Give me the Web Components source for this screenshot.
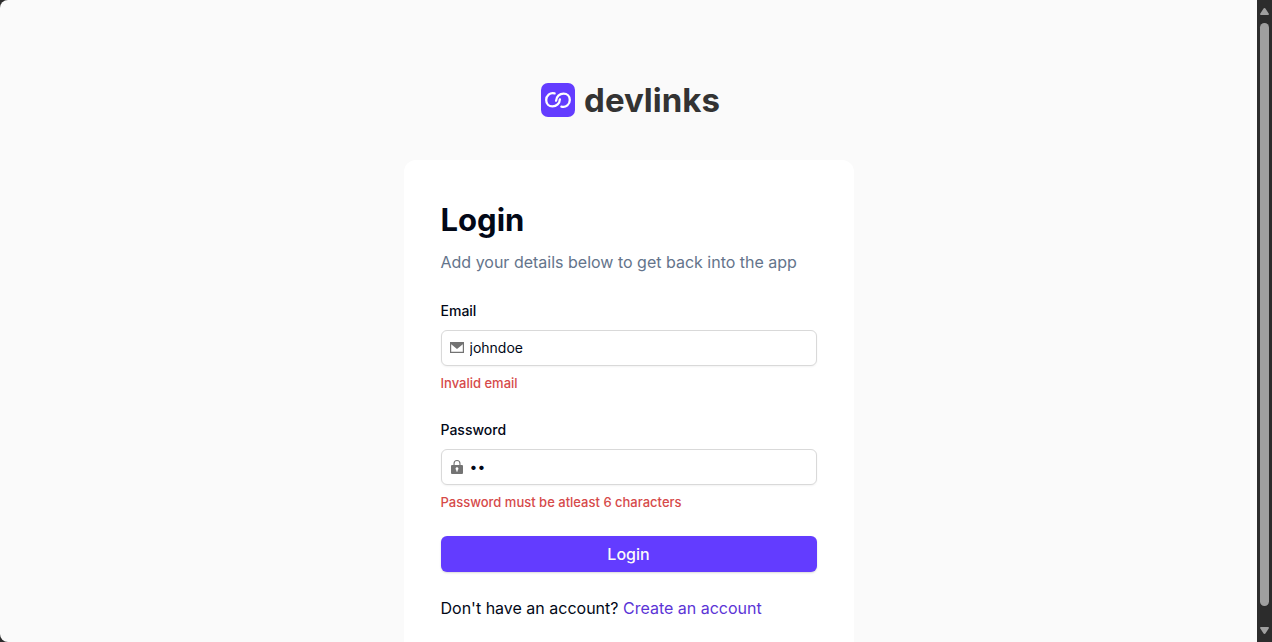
<!DOCTYPE html>
<html lang="en">
<head>
<meta charset="utf-8">
<meta name="viewport" content="width=device-width, initial-scale=1">
<title>devlinks | Login</title>
<style>
  html, body { margin: 0; height: 100%; }
  body {
    background: #2c2c2c;
    color: #020817;
    font: 16px/24px Inter, "Liberation Sans", sans-serif;
    overflow: hidden;
    --brand: #633cff;
    --muted: #64748b;
    --danger: #d64a4a;
    --line: #d9d9d9;
  }
</style>
</head>
<body>
<app-shell>
  <brand-logo></brand-logo>
  <login-card heading="Login" intro="Add your details below to get back into the app"></login-card>
</app-shell>

<script>
class BaseElement extends HTMLElement {
  render(html) {
    const template = document.createElement('template');
    template.innerHTML = html;
    this.attachShadow({ mode: 'open' }).append(template.content.cloneNode(true));
  }
}

customElements.define('scroll-rail', class extends BaseElement {
  connectedCallback() {
    this.render(`
      <style>
        :host { display: flex; flex-direction: column; align-items: center; width: 15px; background: #2c2c2c; }
        svg { display: block; flex: none; fill: #9f9f9f; }
        .thumb { flex: 583; width: 9px; border-radius: 5px; background: #9f9f9f; }
        .rest { flex: 13; }
      </style>
      <svg width="9" height="23"><path d="M4.5 8 Q5.2 8 5.6 8.7 L9 14 Q9 15 8 15 H1 Q0 15 0 14 L3.4 8.7 Q3.8 8 4.5 8Z"/></svg>
      <div class="thumb"></div>
      <div class="rest"></div>
      <svg width="9" height="23"><path d="M4.5 15 Q5.2 15 5.6 14.3 L9 9 Q9 8 8 8 H1 Q0 8 0 9 L3.4 14.3 Q3.8 15 4.5 15Z"/></svg>`);
  }
});

customElements.define('app-shell', class extends BaseElement {
  connectedCallback() {
    this.render(`
      <style>
        :host { display: flex; height: 100vh; }
        main {
          flex: 1; box-sizing: border-box; min-width: 0; overflow: hidden;
          display: flex; flex-direction: column; align-items: center; gap: 40px;
          padding: 80px 16px; background: #fafafa; border-radius: 8px 0 0 8px;
        }
        ::slotted(*) { flex: none; }
      </style>
      <main><slot></slot></main>
      <scroll-rail aria-hidden="true"></scroll-rail>`);
  }
});

customElements.define('brand-logo', class extends BaseElement {
  connectedCallback() {
    this.render(`
      <style>
        :host { display: flex; align-items: center; gap: 9px; height: 40px; padding-left: 4px; color: #333; font-size: 33px; line-height: 40px; font-weight: 700; }
        svg { display: block; }
      </style>
      <svg width="34" height="34" viewBox="0 0 34 34" aria-hidden="true">
        <rect width="34" height="34" rx="7" fill="#633cff"/>
        <g fill="none" stroke="#fff" stroke-width="2.3" stroke-linecap="round">
          <path d="M13.6 10.4C8.9 9.2 5.2 12.7 5.2 17C5.2 21 8 23.4 11.4 23.4C15.5 23.4 18.7 20.5 18.9 16.3"/>
          <path transform="rotate(180 17 17)" d="M13.6 10.4C8.9 9.2 5.2 12.7 5.2 17C5.2 21 8 23.4 11.4 23.4C15.5 23.4 18.7 20.5 18.9 16.3"/>
        </g>
      </svg>
      <span>devlinks</span>`);
  }
});

const ICONS = {
  email: '<path fill-rule="evenodd" d="M1 2H15V13H1Z M2.2 4.2V11.8H13.8V4.2L8 9Z"/>',
  password: '<path fill-rule="evenodd" d="M4.5 6V4.5a3.5 3.5 0 0 1 7 0V6H13q1 0 1 1v7q0 1-1 1H3q-1 0-1-1V7q0-1 1-1Z M5.6 6H10.4V4.5a2.4 2.4 0 0 0-4.8 0Z M8 8.2a1.5 1.5 0 0 0-.7 2.8V12.5h1.4V11A1.5 1.5 0 0 0 8 8.2Z"/>'
};

customElements.define('form-field', class extends BaseElement {
  connectedCallback() {
    const type = this.getAttribute('type');
    this.render(`
      <style>
        :host { display: flex; flex-direction: column; gap: 6px; }
        label { font-size: 14px; line-height: 26px; font-weight: 500; }
        .box {
          display: flex; align-items: center; gap: 5px; box-sizing: border-box; height: 36px; padding: 0 7px;
          border: 1px solid var(--line); border-radius: 6px; background: #fff; box-shadow: 0 1px 2px rgb(0 0 0 / .05);
        }
        svg { flex: none; fill: #737373; }
        input {
          flex: 1; min-width: 0; margin: 0; padding: 0; border: 0; outline: 0; background: none;
          color: inherit; font: 14px/20px Inter, "Liberation Sans", sans-serif;
        }
        p { margin: 0; color: var(--danger); font-size: 13px; line-height: 23px; font-weight: 500; }
      </style>
      <label for="control">${this.getAttribute('label')}</label>
      <div class="box">
        <svg width="16" height="16" viewBox="0 0 16 16" aria-hidden="true">${ICONS[type]}</svg>
        <input id="control" type="${type}" value="${this.getAttribute('value')}" aria-invalid="true" aria-describedby="error">
      </div>
      <p id="error"><slot></slot></p>`);
  }
});

customElements.define('primary-button', class extends BaseElement {
  connectedCallback() {
    this.render(`
      <style>
        :host { display: block; }
        button {
          display: block; width: 100%; height: 36px; padding: 0; border: 0; border-radius: 6px;
          background: var(--brand); color: #fafafa; font: 500 16px/24px Inter, "Liberation Sans", sans-serif;
          box-shadow: 0 1px 2px rgb(0 0 0 / .15);
        }
      </style>
      <button type="button"><slot></slot></button>`);
  }
});

customElements.define('login-card', class extends BaseElement {
  connectedCallback() {
    this.render(`
      <style>
        :host {
          display: block; box-sizing: border-box; width: 100%; max-width: 450px;
          padding: 40px 37px; border-radius: 12px; background: #fff;
        }
        h1 { margin: 0; font-size: 31px; line-height: 40px; font-weight: 700; }
        .intro { margin: 10px 0 24px; color: var(--muted); }
        form { display: flex; flex-direction: column; gap: 22px; }
        .signup { margin: 0; line-height: 28px; }
        a { color: #5b34d6; text-decoration: none; }
      </style>
      <h1>${this.getAttribute('heading')}</h1>
      <p class="intro">${this.getAttribute('intro')}</p>
      <form novalidate>
        <form-field label="Email" type="email" value="johndoe">Invalid email</form-field>
        <form-field label="Password" type="password" value="ab">Password must be atleast 6 characters</form-field>
        <primary-button>Login</primary-button>
        <p class="signup">Don't have an account? <a href="#create-account">Create an account</a></p>
      </form>`);
  }
});
</script>
</body>
</html>
